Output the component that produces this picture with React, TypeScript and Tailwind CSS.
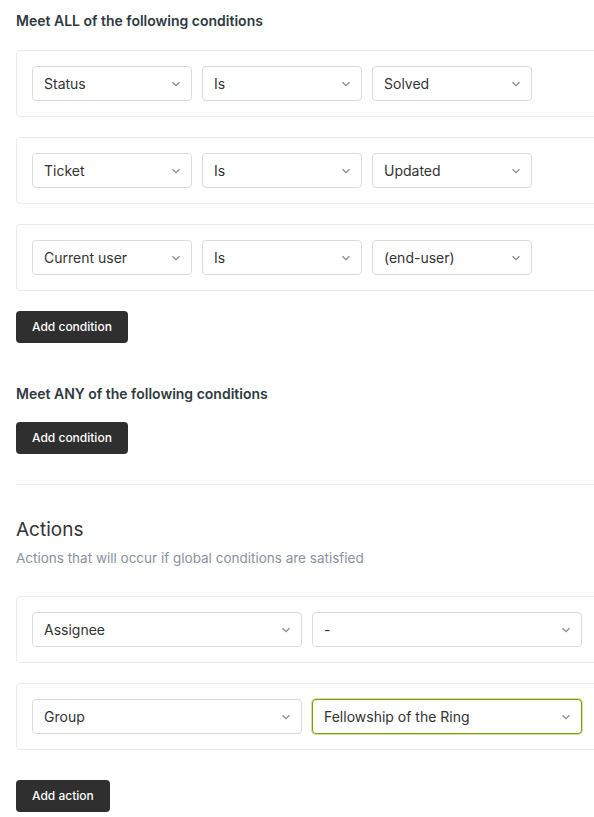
import type { ReactNode } from "react";

function Chevron() {
  return (
    <svg width="10" height="6" viewBox="0 0 10 6" className="shrink-0">
      <path d="M1.5 1.2 5 4.6 8.5 1.2" fill="none" stroke="#8a8a8a" strokeWidth="1.3" />
    </svg>
  );
}

function Select({ value, wide, focused }: { value: string; wide?: boolean; focused?: boolean }) {
  return (
    <div
      className={
        "flex h-[35px] items-center justify-between rounded-[4px] border bg-white pl-[11px] pr-[10px] text-[14px] text-[#333] " +
        (wide ? "w-[270px] " : "w-[160px] ") +
        (focused ? "border-[#78a300] shadow-[0_0_0_1px_rgba(120,163,0,0.35)]" : "border-[#d8dcde]")
      }
    >
      <span>{value}</span>
      <Chevron />
    </div>
  );
}

function Row({ children }: { children: ReactNode }) {
  return (
    <div className="flex w-[600px] gap-[10px] rounded-l-[4px] border border-[#e9ebed] px-[15px] py-[15px]">
      {children}
    </div>
  );
}

function Button({ label }: { label: string }) {
  return (
    <button className="h-[32px] rounded-[4px] bg-[#2f2f2f] px-[16px] text-[12px] font-medium text-white">
      {label}
    </button>
  );
}

const conditions = [
  ["Status", "Is", "Solved"],
  ["Ticket", "Is", "Updated"],
  ["Current user", "Is", "(end-user)"],
];

export default function App() {
  return (
    <div className="h-[817px] w-[594px] overflow-hidden bg-white pl-4 font-['Inter','Liberation_Sans',sans-serif] text-[#2f3941]">
      <h3 className="pt-[12px] text-[14px] font-semibold leading-[18px]">Meet ALL of the following conditions</h3>

      <div className="mt-[20px] flex flex-col gap-[20px]">
        {conditions.map((c) => (
          <Row key={c[0]}>
            {c.map((v, i) => (
              <Select key={i} value={v} />
            ))}
          </Row>
        ))}
      </div>

      <div className="mt-[20px]">
        <Button label="Add condition" />
      </div>

      <h3 className="mt-[42px] text-[14px] font-semibold leading-[18px]">Meet ANY of the following conditions</h3>
      <div className="mt-[19px]">
        <Button label="Add condition" />
      </div>

      <div className="mt-[30px] h-px w-[600px] bg-[#e9ebed]" />

      <h2 className="mt-[32px] text-[19px] leading-[26px] text-[#333]">Actions</h2>
      <p className="mt-[6px] text-[13.5px] leading-[18px] text-[#87929d]">
        Actions that will occur if global conditions are satisfied
      </p>

      <div className="mt-[29px] flex flex-col gap-[20px]">
        <Row>
          <Select value="Assignee" wide />
          <Select value="-" wide />
        </Row>
        <Row>
          <Select value="Group" wide />
          <Select value="Fellowship of the Ring" wide focused />
        </Row>
      </div>

      <div className="mt-[30px]">
        <Button label="Add action" />
      </div>
    </div>
  );
}
